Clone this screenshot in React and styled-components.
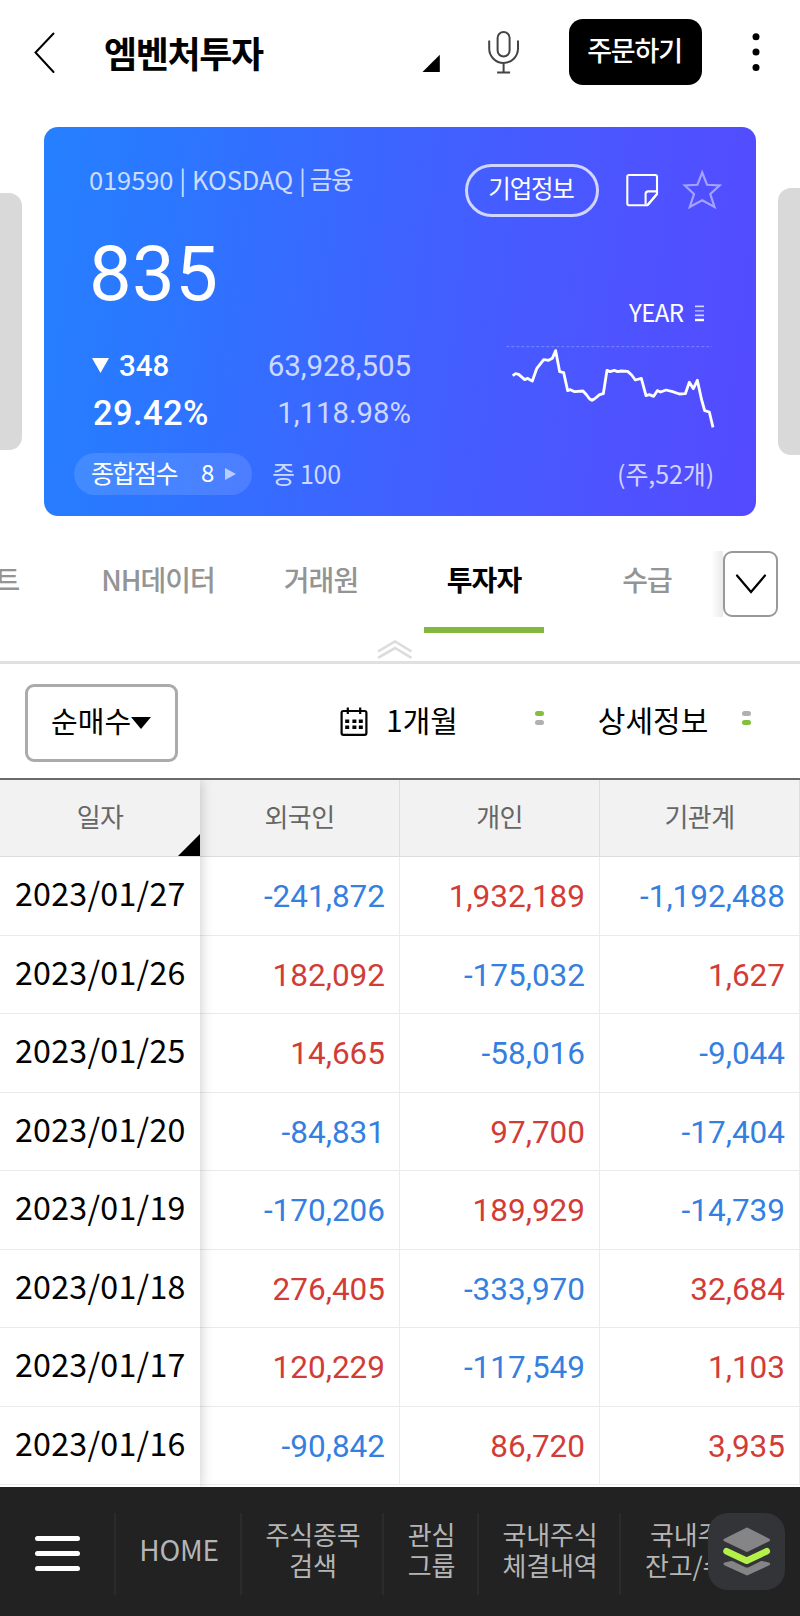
import React from 'react';
import styled, { createGlobalStyle } from 'styled-components';

const Global = createGlobalStyle`
  * { box-sizing: border-box; }
  body { margin: 0; background: #fff; }
  button { border: 0; background: none; padding: 0; margin: 0; font: inherit; color: inherit; }
  svg { display: block; flex: none; }
`;

const cjk = '"Noto Sans CJK KR", sans-serif';
const num = 'Roboto, "Noto Sans CJK KR", sans-serif';

const Screen = styled.div`
  width: 800px;
  height: 1616px;
  overflow: hidden;
  display: flex;
  flex-direction: column;
  background: #fff;
  color: #000;
  font-family: ${cjk};
`;

const Label = styled.span`
  flex: none;
  white-space: pre;
  font-family: ${(p) => (p.$num ? num : cjk)};
  font-size: ${(p) => p.$size}px;
  font-weight: ${(p) => p.$weight || 400};
  letter-spacing: ${(p) => p.$track || 0}px;
  word-spacing: ${(p) => p.$word || 0}px;
  line-height: ${(p) => p.$line || 40}px;
  color: ${(p) => p.$color || 'inherit'};
`;

/* Header */
const Header = styled.header`
  height: 127px;
  flex: none;
  display: flex;
  align-items: flex-start;
  padding: 19px 0 0 32px;
`;
const IconSlot = styled.span`
  display: flex;
  flex: none;
  margin: ${(p) => p.$m || 0};
`;
const Title = styled.h1`
  margin: 7px 0 0 46px;
  width: 320px;
  font-size: 36px;
  font-weight: 700;
  letter-spacing: -1.4px;
  line-height: 52px;
  white-space: nowrap;
`;
const OrderButton = styled.button`
  width: 133px;
  height: 66px;
  margin-left: 49px;
  border-radius: 14px;
  background: #000;
  color: #fff;
  display: flex;
  justify-content: center;
  padding: 11px 2px 0 0;
`;

/* Quote card */
const Carousel = styled.section`
  height: 389px;
  flex: none;
  display: flex;
  align-items: flex-start;
`;
const Peek = styled.div`
  width: 22px;
  height: ${(p) => p.$h}px;
  margin-top: ${(p) => p.$top}px;
  background: #d9d9d9;
  border-radius: ${(p) => (p.$right ? '13px 0 0 13px' : '0 13px 13px 0')};
`;
const Card = styled.article`
  width: 712px;
  height: 389px;
  margin: 0 22px;
  border-radius: 14px;
  background: linear-gradient(97deg, #2680ff 0%, #2a78ff 15%, #3f62ff 50%, #4d54ff 78%, #544aff 100%);
  color: #fff;
`;
const CardTop = styled.div`
  height: 90px;
  padding: 37px 0 0 45px;
  display: flex;
  align-items: flex-start;
`;
const CodeLine = styled.div`
  width: 376px;
  margin-top: -5px;
  display: flex;
`;
const InfoPill = styled.button`
  width: 134px;
  height: 53px;
  border: 3px solid rgba(255, 255, 255, 0.75);
  border-radius: 27px;
  display: flex;
  justify-content: center;
  padding-right: 2px;
`;
const CardBody = styled.div`
  display: flex;
`;
const Quote = styled.div`
  width: 376px;
  display: flex;
  flex-direction: column;
`;
const Price = styled.div`
  height: 125px;
  padding-left: 45px;
`;
const StatRow = styled.div`
  height: 47px;
  padding: 0 9px 0 ${(p) => p.$left}px;
  display: flex;
  align-items: center;
`;
const Push = styled.div`
  margin-left: auto;
  display: flex;
`;
const ScoreRow = styled.div`
  height: 42px;
  margin: 17px 0 0 30px;
  display: flex;
`;
const ScorePill = styled.button`
  width: 178px;
  height: 42px;
  border-radius: 21px;
  background: rgba(255, 255, 255, 0.12);
  display: flex;
  align-items: center;
  padding-left: 17px;
`;
const Trend = styled.div`
  width: 292px;
  padding: 77px 0 0 80px;
  display: flex;
  flex-direction: column;
`;
const Period = styled.div`
  height: 36px;
  padding-left: 129px;
  display: flex;
  align-items: flex-start;
`;
const WeekNote = styled.div`
  width: 214px;
  height: 42px;
  margin-top: 16px;
  display: flex;
  justify-content: flex-end;
`;

/* Tabs */
const TabBar = styled.nav`
  height: 148px;
  flex: none;
  border-bottom: 3px solid #e0e0e0;
  display: flex;
  flex-direction: column;
`;
const TabRow = styled.div`
  height: 117px;
  display: flex;
  align-items: flex-start;
  overflow: hidden;
`;
const Tab = styled.div`
  width: ${(p) => p.$w}px;
  height: 117px;
  flex: none;
  margin-left: ${(p) => p.$gap || 0}px;
  padding-top: 42px;
  display: flex;
  justify-content: center;
  font-size: 28px;
  font-weight: ${(p) => (p.$active ? 700 : 500)};
  letter-spacing: -1px;
  line-height: 42px;
  white-space: nowrap;
  color: ${(p) => (p.$active ? '#000' : '#949494')};
  border-bottom: 6px solid ${(p) => (p.$active ? '#83b73f' : 'transparent')};
`;
const Shade = styled.div`
  width: 12px;
  height: 66px;
  margin: 35px 0 0 4px;
  background: linear-gradient(90deg, #fff, #eaeaea);
`;
const MoreButton = styled.button`
  width: 55px;
  height: 66px;
  margin-top: 35px;
  border: 2px solid #999;
  border-radius: 9px;
  background: #fff;
  display: flex;
  align-items: center;
  justify-content: center;
`;
const Collapse = styled.div`
  padding: 7px 0 0 377px;
`;

/* Filters */
const Filters = styled.section`
  height: 114px;
  flex: none;
  padding: 20px 0 0 25px;
  display: flex;
  align-items: flex-start;
`;
const Select = styled.button`
  width: 153px;
  height: 78px;
  border: 3px solid #ababab;
  border-radius: 9px;
  display: flex;
  align-items: flex-start;
  padding: 13px 0 0 23px;
`;
const Filter = styled.div`
  display: flex;
  align-items: center;
  height: 40px;
  margin: 15px 0 0 ${(p) => p.$gap}px;
`;
const Toggle = styled.span`
  display: flex;
  flex-direction: column;
  gap: 4px;
  margin-left: ${(p) => p.$gap}px;
  margin-top: -3px;
`;
const Pip = styled.i`
  width: 9px;
  height: 5px;
  border-radius: 3px;
  background: ${(p) => (p.$on ? '#83bf3a' : '#b0b0b0')};
`;

/* Table */
const Table = styled.section`
  height: 709px;
  flex: none;
  border-top: 2px solid #6a6a6a;
  display: flex;
  overflow: hidden;
`;
const Column = styled.div`
  width: 200px;
  flex: none;
  display: flex;
  flex-direction: column;
  box-shadow: ${(p) => (p.$pinned ? '1px 0 12px rgba(0,0,0,0.2)' : 'none')};
  z-index: ${(p) => (p.$pinned ? 1 : 0)};
  position: relative;
`;
const HeadCell = styled.div`
  height: 77px;
  flex: none;
  display: flex;
  justify-content: center;
  padding-top: 16px;
  background: #f2f2f2;
  border-bottom: 1px solid #dcdcdc;
  border-right: ${(p) => (p.$pinned ? 0 : 1)}px solid #dedede;
  position: relative;
`;
const SortMark = styled.i`
  position: absolute;
  right: 0;
  bottom: 0;
  width: 22px;
  height: 22px;
  background: #000;
  clip-path: polygon(100% 0, 100% 100%, 0 100%);
`;
const Cell = styled.div`
  height: 78.5px;
  flex: none;
  display: flex;
  justify-content: ${(p) => (p.$pinned ? 'flex-start' : 'flex-end')};
  padding: ${(p) => (p.$pinned ? '13px 0 0 15px' : '20px 14px 0 0')};
  background: #fff;
  border-bottom: 1px solid #ebebeb;
  border-right: ${(p) => (p.$pinned ? 0 : 1)}px solid #ebebeb;
`;

/* Bottom bar */
const BottomBar = styled.footer`
  height: 129px;
  flex: none;
  background: #222;
  display: flex;
  padding-top: 26px;
  position: relative;
  color: #b5b5b5;
`;
const NavItem = styled.div`
  width: ${(p) => p.$w}px;
  height: 82px;
  flex: none;
  border-right: ${(p) => (p.$last ? 0 : 2)}px solid #2b2b2b;
  display: flex;
  align-items: center;
  justify-content: center;
  padding: 0 0 ${(p) => p.$lift || 0}px ${(p) => p.$shift || 0}px;
  font-size: ${(p) => p.$size || 26}px;
  letter-spacing: -0.2px;
  line-height: 31px;
  text-align: center;
  white-space: pre;
`;
const MenuLines = styled.span`
  width: 45px;
  display: flex;
  flex-direction: column;
  gap: 10px;
`;
const MenuLine = styled.i`
  height: 5px;
  border-radius: 2.5px;
  background: #fff;
`;
const Floating = styled.button`
  position: absolute;
  left: 708px;
  top: 26px;
  width: 77px;
  height: 77px;
  border-radius: 20px;
  background: #333438;
`;

const soft = 'rgba(255,255,255,0.75)';

const DATES = ['27', '26', '25', '20', '19', '18', '17', '16'].map((d) => `2023/01/${d}`);
const COLUMNS = [
  ['외국인', ['-241,872', '182,092', '14,665', '-84,831', '-170,206', '276,405', '120,229', '-90,842']],
  ['개인', ['1,932,189', '-175,032', '-58,016', '97,700', '189,929', '-333,970', '-117,549', '86,720']],
  ['기관계', ['-1,192,488', '1,627', '-9,044', '-17,404', '-14,739', '32,684', '1,103', '3,935']],
];

const BackIcon = () => (
  <svg width="26" height="44" viewBox="0 0 26 44" fill="none" stroke="#000" strokeWidth="2">
    <path d="M21.5 3.5 3.5 22.5 21.5 42" strokeLinecap="round" />
  </svg>
);
const CornerIcon = () => (
  <svg width="18" height="18" viewBox="0 0 18 18">
    <path d="M17.8 0.8V18H0.5Z" fill="#000" />
  </svg>
);
const MicIcon = () => (
  <svg width="32" height="44" viewBox="0 0 32 44" fill="none" stroke="#444" strokeWidth="2">
    <rect x="9.6" y="2" width="12" height="24.5" rx="6" />
    <path d="M1.2 10.5V18.5a14.4 14.4 0 0 0 28.8 0V10.5M15.6 33v9.5M9.1 42.5h13" />
  </svg>
);
const DotsIcon = () => (
  <svg width="8" height="40" viewBox="0 0 8 40">
    <circle cx="4" cy="4.7" r="3.5" />
    <circle cx="4" cy="20.1" r="3.5" />
    <circle cx="4" cy="35.6" r="3.5" />
  </svg>
);
const NoteIcon = () => (
  <svg width="34" height="34" viewBox="0 0 34 34" fill="none" stroke="#fff" strokeWidth="2.1" strokeLinejoin="round">
    <path d="M3 2H29.3q1.7 0 1.7 1.7V21L21.5 32.2H3q-1.7 0-1.7-1.7V3.7Q1.3 2 3 2Z" />
    <path d="M19.6 31.5V21q0-2.6 2.6-2.6H31V21L22 31.5" />
  </svg>
);
const StarIcon = () => (
  <svg width="40" height="42" viewBox="0 0 40 42" fill="none" stroke="#a5a2ff" strokeWidth="2.2">
    <path d="M20.2 3.5 25.1 15.8 37.5 16.5 28.3 25 32.5 38 20.2 31.3 7.8 38 12 25 2.8 16.5 15.4 15.8Z" />
  </svg>
);
const LevelIcon = () => (
  <svg width="9" height="17" viewBox="0 0 9 17" fill="#fff">
    <rect y="0.5" width="9" height="1.7" opacity="0.75" />
    <rect y="5" width="9" height="1.7" opacity="0.5" />
    <rect y="9.5" width="9" height="1.7" opacity="0.75" />
    <rect y="13.8" width="9" height="2.4" />
  </svg>
);
const TrendChart = () => (
  <svg width="220" height="107" viewBox="300 330 660 321" fill="none" stroke="#fff">
    <path d="M319 380H936" strokeWidth="3" strokeDasharray="9 6" opacity="0.28" />
    <path
      d="M338 467 347 461 356 463 374 479 383 475 389 479 397 483 410 446 431 419 446 421 457 415 467 392 479 455 491 458 503 512 511 509 524 515 549 513 560 525 569 537 576 541 583 537 599 524 610 521 621 451 630 455 643 451 653 455 664 453 683 454 695 465 706 480 724 475 738 527 748 524 761 529 772 512 782 516 798 510 818 515 838 522 856 521 868 487 880 506 892 481 905 540 914 572 928 576 939 622"
      strokeWidth="8.5"
      strokeLinejoin="round"
    />
  </svg>
);
const ChevronDown = () => (
  <svg width="32" height="22" viewBox="0 0 32 22" fill="none" stroke="#000" strokeWidth="2.2">
    <path d="M2 2.5 16 19 30 2.5" strokeLinecap="round" />
  </svg>
);
const DoubleUp = () => (
  <svg width="36" height="20" viewBox="0 0 36 20" fill="none" stroke="#dcdcdc" strokeWidth="2.6">
    <path d="M1 11.5 18 1.5 34.5 11.5M1 17.8 18 8 34.5 17.8" />
  </svg>
);
const CalendarIcon = () => (
  <svg width="28" height="30" viewBox="0 0 28 30" fill="none" stroke="#000" strokeWidth="2.2">
    <rect x="1.6" y="4" width="24.8" height="23.8" rx="1.8" />
    <path d="M7.8 0.5v6.5M20.2 0.5v6.5" />
    <path d="M5.2 14.2h4M12.4 14.2h4M18.8 14.2h4M5.2 20.2h4M12.4 20.2h4M18.8 20.2h4" strokeWidth="3.6" />
  </svg>
);
const LayersIcon = () => (
  <svg width="77" height="77" viewBox="0 0 77 77" strokeLinejoin="round">
    <path d="M17 51 39 61 60.5 51 39 46Z" fill="#858587" stroke="#858587" strokeWidth="3" />
    <path d="M17 39 39 49.5 60 39" fill="none" stroke="#333438" strokeWidth="10" />
    <path d="M18.5 38.2 38.7 47.8 58.8 38.2" fill="none" stroke="#b5f04a" strokeWidth="6.5" strokeLinecap="round" />
    <path d="M17 27 39 16 60.5 27 39 37.5Z" fill="#858587" stroke="#858587" strokeWidth="3" />
  </svg>
);
const Arrow = ({ w, h, d, fill = '#fff' }) => (
  <svg width={w} height={h} viewBox={`0 0 ${w} ${h}`}>
    <path d={d} fill={fill} />
  </svg>
);

export default function App() {
  return (
    <>
      <Global />
      <Screen>
        <Header>
          <IconSlot $m="11px 0 0 0"><BackIcon /></IconSlot>
          <Title>엠벤처투자</Title>
          <IconSlot $m="35px 0 0 -2px"><CornerIcon /></IconSlot>
          <IconSlot $m="11px 0 0 48px"><MicIcon /></IconSlot>
          <OrderButton>
            <Label $size={27} $weight={500} $track={-1.2}>주문하기</Label>
          </OrderButton>
          <IconSlot $m="13px 0 0 50px"><DotsIcon /></IconSlot>
        </Header>

        <Carousel>
          <Peek $h={257} $top={66} />
          <Card>
            <CardTop>
              <CodeLine>
                <Label $size={25.5} $track={-0.1} $word={0.4} $color={soft}>{'019590 | KOSDAQ |'}</Label>
                <IconSlot $m="0 0 0 4px"><Label $size={24.5} $track={-1.2} $color={soft}>금융</Label></IconSlot>
              </CodeLine>
              <InfoPill>
                <Label $size={24.5} $track={-1.2} $line={42}>기업정보</Label>
              </InfoPill>
              <IconSlot $m="9px 0 0 27px"><NoteIcon /></IconSlot>
              <IconSlot $m="5px 0 0 22px"><StarIcon /></IconSlot>
            </CardTop>
            <CardBody>
              <Quote>
                <Price><Label $num $size={76} $track={0.4} $line={115}>835</Label></Price>
                <StatRow $left={48}>
                  <Arrow w={17} h={15} d="M0 0H17L8.5 15Z" />
                  <IconSlot $m="0 0 0 10px"><Label $num $size={29.5} $weight={500}>348</Label></IconSlot>
                  <Push><Label $num $size={29.5} $track={-0.1} $color={soft}>63,928,505</Label></Push>
                </StatRow>
                <StatRow $left={49}>
                  <Label $num $size={34.5} $weight={500} $track={0.4}>29.42%</Label>
                  <Push><IconSlot $m="1px 0 0 0"><Label $num $size={29.3} $color={soft}>1,118.98%</Label></IconSlot></Push>
                </StatRow>
                <ScoreRow>
                  <ScorePill>
                    <IconSlot $m="-5px 0 0 0"><Label $size={25} $track={-1.5}>종합점수</Label></IconSlot>
                    <IconSlot $m="-4px 0 0 24px"><Label $size={24}>8</Label></IconSlot>
                    <IconSlot $m="0 0 0 11px"><Arrow w={11} h={12} d="M0 0V12L11 6Z" fill="rgba(255,255,255,0.6)" /></IconSlot>
                  </ScorePill>
                  <IconSlot $m="0 0 0 20px"><Label $size={25} $track={-0.3} $color={soft}>증 100</Label></IconSlot>
                </ScoreRow>
              </Quote>
              <Trend>
                <Period>
                  <Label $size={24} $track={-0.6} $line={35}>YEAR</Label>
                  <IconSlot $m="11px 0 0 12px"><LevelIcon /></IconSlot>
                </Period>
                <TrendChart />
                <WeekNote><Label $size={25} $track={-0.1} $color={soft}>(주,52개)</Label></WeekNote>
              </Trend>
            </CardBody>
          </Card>
          <Peek $right $h={267} $top={61} />
        </Carousel>

        <TabBar>
          <TabRow>
            <Tab $w={30} $gap={-8}>트</Tab>
            <Tab $w={120} $gap={76}>NH데이터</Tab>
            <Tab $w={120} $gap={43}>거래원</Tab>
            <Tab $w={120} $gap={43} $active>투자자</Tab>
            <Tab $w={120} $gap={43}>수급</Tab>
            <Shade />
            <MoreButton><ChevronDown /></MoreButton>
          </TabRow>
          <Collapse><DoubleUp /></Collapse>
        </TabBar>

        <Filters>
          <Select>
            <Label $size={29} $track={0.1}>순매수</Label>
            <Arrow w={20} h={29} d="M0 17H20L10 29Z" fill="#000" />
          </Select>
          <Filter $gap={162}>
            <IconSlot $m="5px 18px 0 0"><CalendarIcon /></IconSlot>
            <Label $size={30} $track={0}>1개월</Label>
          </Filter>
          <Filter $gap={0}>
            <Toggle $gap={77}><Pip $on /><Pip /></Toggle>
          </Filter>
          <Filter $gap={54}><Label $size={30} $track={0}>상세정보</Label></Filter>
          <Filter $gap={0}>
            <Toggle $gap={34}><Pip /><Pip $on /></Toggle>
          </Filter>
        </Filters>

        <Table>
          <Column $pinned>
            <HeadCell $pinned>
              <Label $size={26} $track={-0.6} $color="#666">일자</Label>
              <SortMark />
            </HeadCell>
            {DATES.map((d) => (
              <Cell $pinned key={d}><Label $size={32.2} $track={0.25} $line={44}>{d}</Label></Cell>
            ))}
          </Column>
          {COLUMNS.map(([name, values]) => (
            <Column key={name}>
              <HeadCell><Label $size={26} $track={-0.6} $color="#666">{name}</Label></HeadCell>
              {values.map((v) => (
                <Cell key={v}>
                  <Label $num $size={31.5} $color={v[0] === '-' ? '#357fe0' : '#d23c36'}>{v}</Label>
                </Cell>
              ))}
            </Column>
          ))}
        </Table>

        <BottomBar>
          <NavItem $w={116} $lift={2}>
            <MenuLines><MenuLine /><MenuLine /><MenuLine /></MenuLines>
          </NavItem>
          <NavItem $w={126} $size={28} $lift={10} $shift={2}>HOME</NavItem>
          <NavItem $w={142} $lift={10} $shift={2}>{'주식종목\n검색'}</NavItem>
          <NavItem $w={95} $lift={10} $shift={2}>{'관심\n그룹'}</NavItem>
          <NavItem $w={142} $lift={10} $shift={2}>{'국내주식\n체결내역'}</NavItem>
          <NavItem $w={150} $lift={10} $shift={3} $last>{'국내주식\n잔고/수익'}</NavItem>
          <Floating><LayersIcon /></Floating>
        </BottomBar>
      </Screen>
    </>
  );
}
